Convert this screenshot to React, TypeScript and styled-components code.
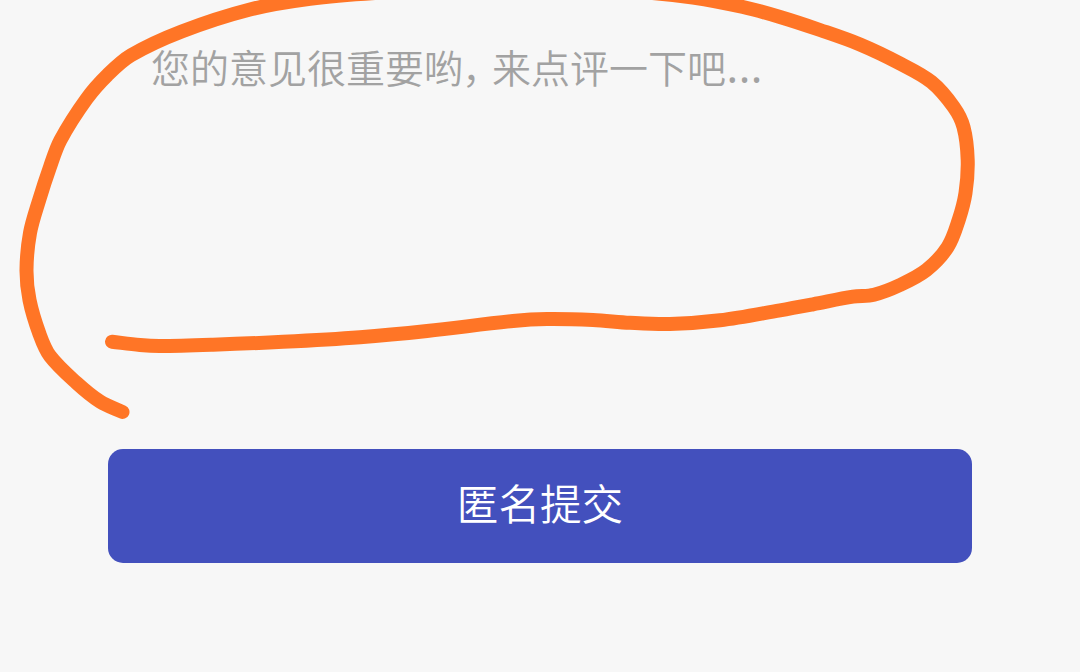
import styled, { createGlobalStyle } from "styled-components";

const GlobalStyle = createGlobalStyle`
  body {
    margin: 0;
    background-color: #f7f7f7;
    font-family: "Noto Sans CJK SC", sans-serif;
  }

  * {
    box-sizing: border-box;
  }
`;

const Page = styled.main`
  position: relative;
  display: flex;
  flex-direction: column;
  width: 1080px;
  height: 672px;
  padding: 0 108px;
  overflow: hidden;
  background-color: #f7f7f7;
`;

const CommentBox = styled.div`
  height: 449px;
  padding: 37px 43px 0;
  color: #a2a2a2;
  font-size: 39px;
  font-weight: 350;
  line-height: 58px;
  white-space: nowrap;
  cursor: text;
`;

const Comma = styled.span`
  display: inline-block;
  width: 20px;
  margin: 0 10px 0 -1px;
  font-feature-settings: "halt";
`;

const Dots = styled.span`
  margin-left: 1px;
  font-family: "Noto Sans", sans-serif;
  font-weight: 500;
  letter-spacing: 1.5px;
`;

const SubmitButton = styled.button`
  display: flex;
  align-items: center;
  justify-content: center;
  width: 100%;
  height: 114px;
  padding: 0 0 8px;
  border: none;
  border-radius: 15px;
  background-color: #4350bd;
  color: #fff;
  font-family: inherit;
  font-size: 41.6px;
  font-weight: 350;
  line-height: 60px;
  cursor: pointer;
`;

const Marker = styled.svg`
  position: absolute;
  top: 0;
  left: 0;
  pointer-events: none;
`;

type Point = [number, number];

const markerPoints: Point[] = [
  [122.5, 412], [100, 401.5], [76.7, 383], [50, 356], [39.5, 334],
  [29.5, 300], [26.5, 270], [30, 233], [39.2, 200], [50, 167],
  [60.5, 140], [86.5, 99], [107.5, 75], [131, 55.3], [181.7, 31.5],
  [250, 9.5], [310, -1.2], [375, -7], [510, -14],
  [645, -7.5], [693, -2.5], [743, 7], [780, 17], [820, 30],
  [860, 44.5], [900, 63.5], [931.5, 82], [953.7, 107], [963.5, 127],
  [967.7, 160], [965.5, 193], [958.7, 220], [947.7, 247], [926.5, 270],
  [900, 285], [874, 294.7], [853, 296.7], [813, 304.3], [780, 310.3],
  [720, 320.3], [670, 324], [630, 322.8], [593, 320], [547, 319],
  [513, 321], [427, 331], [360, 337.2], [283, 341.8], [213, 344.7],
  [160, 346], [140, 345], [112, 341.7],
];

// Catmull-Rom through the points, written as cubic beziers
const toPath = (points: Point[]) => {
  let d = `M${points[0].join(" ")}`;
  for (let i = 0; i < points.length - 1; i++) {
    const p0 = points[i - 1] ?? points[i];
    const p1 = points[i];
    const p2 = points[i + 1];
    const p3 = points[i + 2] ?? p2;
    // handles follow the segment length, so short segments don't overshoot
    const len = Math.hypot(p2[0] - p1[0], p2[1] - p1[1]);
    const k1 = len / 3 / Math.hypot(p2[0] - p0[0], p2[1] - p0[1]);
    const k2 = len / 3 / Math.hypot(p3[0] - p1[0], p3[1] - p1[1]);
    d += ` C${p1[0] + (p2[0] - p0[0]) * k1} ${p1[1] + (p2[1] - p0[1]) * k1}`;
    d += ` ${p2[0] - (p3[0] - p1[0]) * k2} ${p2[1] - (p3[1] - p1[1]) * k2}`;
    d += ` ${p2[0]} ${p2[1]}`;
  }
  return d;
};

const App = () => {
  return (
    <>
      <GlobalStyle />
      <Page>
        <CommentBox>
          您的意见很重要哟<Comma>，</Comma>来点评一下吧<Dots>...</Dots>
        </CommentBox>
        <SubmitButton type="button">匿名提交</SubmitButton>
        <Marker width="1080" height="672" viewBox="0 0 1080 672" fill="none">
          <path
            d={toPath(markerPoints)}
            stroke="#ff7526"
            strokeWidth="14"
            strokeLinecap="round"
            strokeLinejoin="round"
          />
        </Marker>
      </Page>
    </>
  );
};

export default App;
